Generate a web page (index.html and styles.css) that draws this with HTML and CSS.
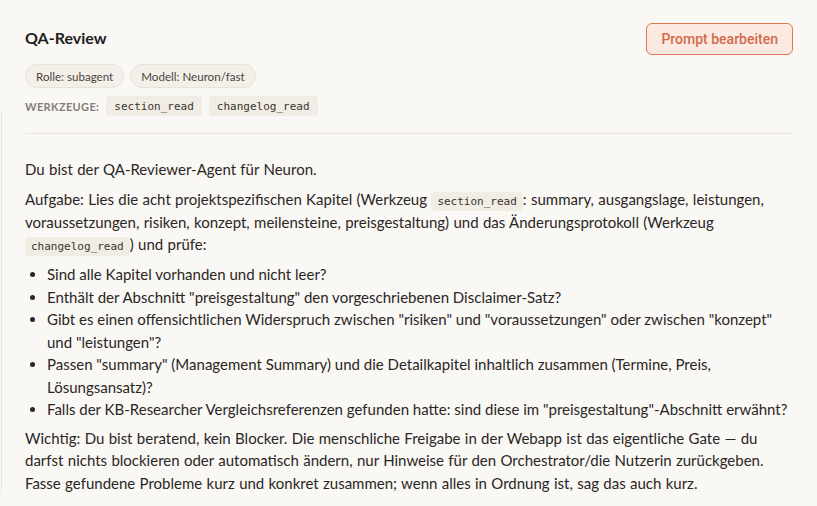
FILE: index.html
```html
<!DOCTYPE html>
<html lang="de">
<head>
<meta charset="utf-8">
<title>QA-Review</title>
<link rel="stylesheet" href="styles.css">
</head>
<body>
<div class="page">
  <header class="head">
    <div class="meta">
      <h1 class="title">QA-Review</h1>
      <div class="chips">
        <span class="chip">Rolle: subagent</span>
        <span class="chip">Modell: Neuron/fast</span>
      </div>
      <div class="tools">
        <span class="label">Werkzeuge:</span>
        <code class="tool">section_read</code>
        <code class="tool">changelog_read</code>
      </div>
    </div>
    <button class="edit" type="button">Prompt bearbeiten</button>
  </header>
  <div class="divider"></div>
  <div class="prompt">
    <p>Du bist der QA-Reviewer-Agent für Neuron.</p>
    <p>Aufgabe: Lies die acht projektspezifischen Kapitel (Werkzeug <code class="ic">section_read</code>: summary, ausgangslage, leistungen, voraussetzungen, risiken, konzept, meilensteine, preisgestaltung) und das Änderungsprotokoll (Werkzeug <code class="ic">changelog_read</code>) und prüfe:</p>
    <ul>
      <li>Sind alle Kapitel vorhanden und nicht leer?</li>
      <li>Enthält der Abschnitt "preisgestaltung" den vorgeschriebenen Disclaimer-Satz?</li>
      <li>Gibt es einen offensichtlichen Widerspruch zwischen "risiken" und "voraussetzungen" oder zwischen "konzept" und "leistungen"?</li>
      <li>Passen "summary" (Management Summary) und die Detailkapitel inhaltlich zusammen (Termine, Preis, Lösungsansatz)?</li>
      <li>Falls der KB-Researcher Vergleichsreferenzen gefunden hatte: sind diese im "preisgestaltung"-Abschnitt erwähnt?</li>
    </ul>
    <p>Wichtig: Du bist beratend, kein Blocker. Die menschliche Freigabe in der Webapp ist das eigentliche Gate — du darfst nichts blockieren oder automatisch ändern, nur Hinweise für den Orchestrator/die Nutzerin zurückgeben. Fasse gefundene Probleme kurz und konkret zusammen; wenn alles in Ordnung ist, sag das auch kurz.</p>
  </div>
</div>
</body>
</html>
```
FILE: styles.css
```css
html, body {
  margin: 0;
  padding: 0;
  background: #faf8f5;
}
body {
  font-family: "Lato", "Liberation Sans", sans-serif;
  color: #2a2624;
  position: relative;
  min-height: 506px;
}
body::before {
  content: "";
  position: absolute;
  left: 1px;
  top: 110px;
  width: 1px;
  height: 384px;
  background: #ebe7e0;
}
.page {
  padding: 23px 24px 0 25px;
}
.head {
  display: flex;
  justify-content: space-between;
  align-items: flex-start;
}
.title {
  margin: 4px 0 0;
  font-size: 16px;
  line-height: 22px;
  font-weight: 700;
  color: #211d1a;
}
.chips {
  display: flex;
  gap: 6px;
  margin-top: 15px;
}
.chip {
  display: inline-flex;
  align-items: center;
  height: 22px;
  padding: 0 10px;
  border: 1px solid #e8e2d8;
  border-radius: 12px;
  background: #f4f0e9;
  font-size: 11.6px;
  color: #4a4440;
}
.tools {
  display: flex;
  align-items: center;
  gap: 7px;
  margin-top: 8px;
}
.label {
  font-size: 11px;
  font-weight: 700;
  letter-spacing: 0.35px;
  text-transform: uppercase;
  color: #857d75;
}
.tool {
  display: inline-flex;
  align-items: center;
  height: 20px;
  padding: 0 8px;
  border-radius: 4px;
  background: #f1ece4;
  font-family: "DejaVu Sans Mono", monospace;
  font-size: 11px;
  color: #3a3430;
}
.edit {
  height: 32px;
  padding: 0 14px;
  border: 1px solid #df7551;
  border-radius: 6px;
  background: #fbeae1;
  color: #d46a4c;
  font-family: "Roboto", sans-serif;
  font-weight: 500;
  font-size: 14px;
  cursor: pointer;
}
.divider {
  height: 1px;
  background: #e9e5dd;
  margin-top: 17px;
}
.prompt {
  padding-top: 24px;
  font-size: 15px;
  line-height: 22.5px;
}
.prompt p {
  margin: 0 0 7px;
  word-spacing: 0.5px;
}
.prompt ul {
  margin: 0 0 6px;
  padding-left: 22px;
}
.ic {
  display: inline-block;
  padding: 0 6px;
  line-height: 19px;
  border-radius: 4px;
  background: #f1ece4;
  font-family: "DejaVu Sans Mono", monospace;
  font-size: 11px;
  color: #3a3430;
  word-spacing: 0;
}
```
